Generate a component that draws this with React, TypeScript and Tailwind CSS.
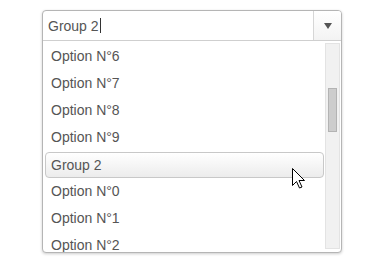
import React from "react";

const before = ["Option N°6", "Option N°7", "Option N°8", "Option N°9"];
const after = ["Option N°0", "Option N°1", "Option N°2"];

export default function App() {
  return (
    <div className="relative w-[376px] h-[257px] bg-white overflow-hidden text-[14px] text-[#555]" style={{ fontFamily: '"Liberation Sans", Arial, sans-serif' }}>
      <div className="ml-[42px] mt-[10px] w-[300px] h-[243px] flex flex-col border border-[#b5b5b5] rounded-[4px] bg-white shadow-[0_1px_3px_rgba(0,0,0,0.2)] overflow-hidden">
        <div className="h-[30px] flex border-b border-[#cfcfcf] shrink-0">
          <div className="flex-1 flex items-center pl-[5px]">
            <span className="leading-none">Group 2</span>
            <span className="w-px h-[15px] bg-[#333] ml-[1px]" />
          </div>
          <div className="w-[28px] flex items-center justify-center border-l border-[#d6d6d6] bg-gradient-to-b from-white to-[#f3f3f3]">
            <svg width="8" height="6" viewBox="0 0 8 6"><path d="M0 0H8L4 6Z" fill="#555" /></svg>
          </div>
        </div>
        <div className="flex-1 flex min-h-0">
          <div className="flex-1 pl-[2px] pr-[1px] pt-[2px] overflow-hidden">
            {before.map((t) => (
              <div key={t} className="h-[27px] flex items-center pl-[6px]">{t}</div>
            ))}
            <div className="h-[26px] mt-[1px] flex items-center pl-[5px] border border-[#c8c8c8] rounded-[4px] bg-gradient-to-b from-white to-[#ececec]">Group 2</div>
            {after.map((t) => (
              <div key={t} className="h-[27px] flex items-center pl-[6px]">{t}</div>
            ))}
          </div>
          <div className="w-[16px] pt-[2px] pb-[3px] pr-px">
            <div className="h-full border border-[#e3e3e3] bg-[#f1f1f1] px-[2px] pt-[44px]">
              <div className="h-[44px] bg-[#cdcdcd] border border-[#b3b3b3]" />
            </div>
          </div>
        </div>
      </div>
      <svg className="absolute left-[292px] top-[168px]" width="13" height="21" viewBox="0 0 13 21">
        <path d="M0.5 0.5V17.5L4.5 13.5L7.5 20L10 19L7 12.5H12.5Z" fill="white" stroke="black" strokeWidth="1" strokeLinejoin="miter" />
      </svg>
    </div>
  );
}
